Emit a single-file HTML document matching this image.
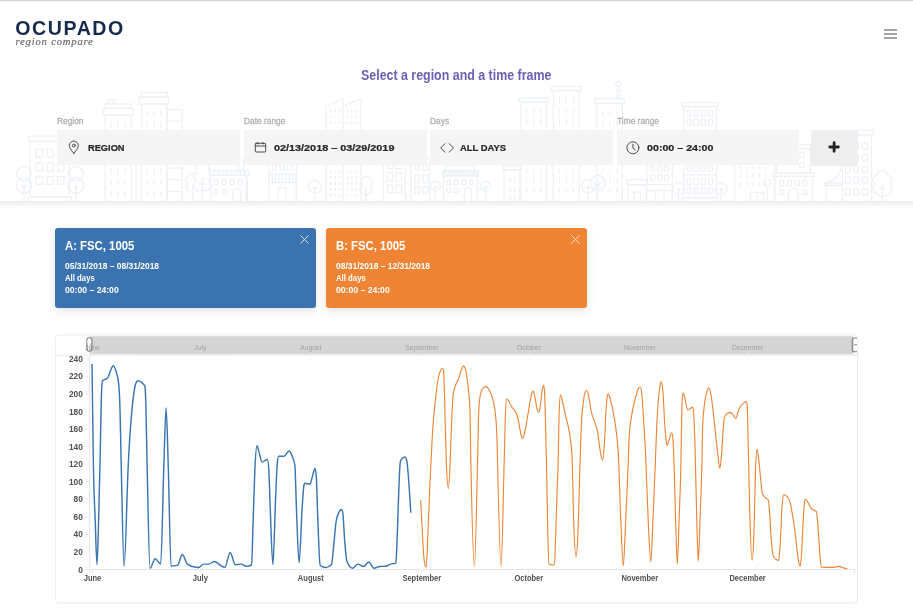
<!DOCTYPE html>
<html><head><meta charset="utf-8"><title>Ocupado region compare</title>
<style>
*{box-sizing:border-box}
html,body{margin:0;padding:0}
body{width:913px;height:614px;overflow:hidden;background:#fff;font-family:"Liberation Sans",sans-serif;position:relative;color:#222}
.abs{position:absolute}
#root{left:0;top:0;width:913px;height:614px;will-change:transform;overflow:hidden}
.sx{display:inline-block;transform-origin:0 50%;white-space:nowrap}
#topline{left:0;top:0;width:913px;height:2px;background:linear-gradient(#d6d7d9 0,#d6d7d9 50%,#f1f1f1 50%,#f1f1f1 100%)}
#header{left:0;top:0;width:913px;height:201px;background:#fff;overflow:hidden}
#hshadow{left:0;top:201px;width:913px;height:8px;background:linear-gradient(#ececec,#f6f6f6 40%,#fff)}
#logo{left:15.3px;top:16.5px;font-weight:bold;font-size:19.6px;letter-spacing:1.55px;color:#152a4c;line-height:22px}
#sub{left:15.5px;top:34.6px;font-family:"Liberation Serif",serif;font-style:italic;font-size:10.6px;letter-spacing:.82px;color:#6e6e6e;line-height:14px;-webkit-text-stroke:.2px #6e6e6e}
.hb{left:884px;width:13px;height:1.6px;background:#a4a4a4}
#title{left:360.7px;top:67px;font-weight:bold;font-size:14.3px;color:#6c5fb4;line-height:17px}
.lab{top:115.8px;font-size:9px;color:#b0b0b0;line-height:10px;-webkit-text-stroke:.3px #b0b0b0}
.fld{top:130px;height:35.4px;width:182.5px;background:rgba(245,245,245,.96);border-radius:1px}
.ftx{top:142.1px;font-weight:bold;font-size:9.8px;color:#262626;line-height:12px;-webkit-text-stroke:.22px #262626}
#plus{left:811px;top:130px;width:47px;height:35.5px;background:#eeeeee;border-radius:2px}
.card{top:228px;width:261px;height:80px;border-radius:3px;box-shadow:0 3px 10px rgba(0,0,0,.1),0 1px 2px rgba(0,0,0,.04);color:#fff}
.card .t{position:absolute;left:10px;top:11.2px;font-weight:bold;font-size:12.6px;line-height:15px}
.card .l{position:absolute;left:10px;font-weight:bold;font-size:8.4px;line-height:10px}
#chartbox{left:55.5px;top:335px;width:802.5px;height:268.4px;border:1px solid #ebebeb;border-radius:2px;background:#fff}
svg text{font-family:"Liberation Sans",sans-serif}
.yt{font-size:8.3px;fill:#505050;font-weight:bold}
.xt{font-size:8.2px;fill:#505050;font-weight:bold}
.bt{font-size:6.8px;fill:#a1a1a1}
</style></head><body>
<div id="root" class="abs">
<div id="header" class="abs">
<svg class="abs" style="left:0;top:0" width="913" height="201" viewBox="0 0 913 201" fill="none" stroke="#edf1f6" stroke-width="1.25"><rect x="28.3" y="136.2" width="43.5" height="5.2"/>
<rect x="30.0" y="141.4" width="39.7" height="55.6"/>
<rect x="28.6" y="197.0" width="43.0" height="5.0"/>
<rect x="36.1" y="149.3" width="6.6" height="7.9"/>
<rect x="47.0" y="149.3" width="6.2" height="7.9"/>
<rect x="57.8" y="149.3" width="6.2" height="7.9"/>
<rect x="36.1" y="163.1" width="6.6" height="7.9"/>
<rect x="47.0" y="163.1" width="6.2" height="7.9"/>
<rect x="57.8" y="163.1" width="6.2" height="7.9"/>
<rect x="36.1" y="176.5" width="6.6" height="7.9"/>
<rect x="47.0" y="176.5" width="6.2" height="7.9"/>
<rect x="57.8" y="176.5" width="6.2" height="7.9"/>
<circle cx="24.0" cy="173.6" r="7.2"/>
<circle cx="24.0" cy="185.5" r="7.8"/>
<path d="M24.0 201V183.5M24.0 188.5l-2.5 -2.5M24.0 188.5l2.5 -2.5"/>
<circle cx="75.8" cy="173.6" r="7.2"/>
<circle cx="75.8" cy="185.5" r="7.8"/>
<path d="M75.8 201V183.5M75.8 188.5l-2.5 -2.5M75.8 188.5l2.5 -2.5"/>
<rect x="108.3" y="99.7" width="5.6" height="4.3"/>
<rect x="104.8" y="104.0" width="26.7" height="4.4"/>
<rect x="103.2" y="108.4" width="29.9" height="6.9"/>
<rect x="105.2" y="115.3" width="25.9" height="86.7"/>
<path d="M111.0 122.0V128.0M118.0 122.0V128.0M124.9 122.0V128.0M111.0 168.0V174.0M118.0 168.0V174.0M124.9 168.0V174.0M111.0 179.7V185.6M118.0 179.7V185.6M124.9 179.7V185.6M111.0 191.5V197.3M118.0 191.5V197.3M124.9 191.5V197.3"/>
<rect x="141.3" y="92.4" width="26.0" height="4.7"/>
<rect x="139.3" y="97.1" width="29.5" height="6.9"/>
<rect x="141.5" y="104.0" width="25.4" height="98.0"/>
<path d="M147.2 110.4V116.3M154.0 110.4V116.3M161.0 110.4V116.3M147.2 122.0V128.0M154.0 122.0V128.0M161.0 122.0V128.0M147.2 168.0V174.0M154.0 168.0V174.0M161.0 168.0V174.0M147.2 179.7V185.6M154.0 179.7V185.6M161.0 179.7V185.6M147.2 191.5V197.3M154.0 191.5V197.3M161.0 191.5V197.3"/>
<rect x="167.3" y="109.4" width="15.0" height="92.6"/>
<path d="M167.3 121.1L182.3 121.1"/>
<path d="M167.3 168.0L182.3 168.0"/>
<path d="M167.3 179.7L182.3 179.7"/>
<path d="M167.3 191.5L182.3 191.5"/>
<path d="M136.0 165.0L136.0 201.0"/>
<path d="M190 192a4.5 4.5 0 0 1-2-8a4.2 4.2 0 0 1 1.500-8a3.4 3.4 0 0 1 6.400 0a4.2 4.2 0 0 1 1.500 8a4.5 4.5 0 0 1-2 8z"/>
<path d="M192.7 201V184"/>
<path fill="#fff" d="M198 190.5a5.5 5.5 0 0 1-2-9.5a5.2 5.2 0 0 1 1.2-9a4.8 4.8 0 0 1 1.8-8a3.6 3.6 0 0 1 6.8 0a4.8 4.8 0 0 1 1.8 8a5.2 5.2 0 0 1 1.2 9a5.5 5.500 0 0 1-2 9.5z"/>
<path d="M202.4 201V178M202.4 185.5l-3 -3M202.4 185.5l3 -3"/>
<rect x="210.0" y="170.6" width="39.0" height="4.8"/>
<rect x="210.8" y="175.4" width="35.6" height="26.6"/>
<path d="M247.6 175.4L247.6 201.0"/>
<path d="M214.3 170.6L214.3 175.4"/>
<path d="M218.7 170.6L218.7 175.4"/>
<path d="M223.0 170.6L223.0 175.4"/>
<path d="M227.3 170.6L227.3 175.4"/>
<path d="M231.7 170.6L231.7 175.4"/>
<path d="M236.0 170.6L236.0 175.4"/>
<path d="M240.3 170.6L240.3 175.4"/>
<path d="M244.6 170.6L244.6 175.4"/>
<path d="M214.3 184.6V181.2A1.8 1.8 0 0 1 217.9 181.2V184.6Z"/>
<path d="M222.5 184.6V181.2A1.8 1.8 0 0 1 226.1 181.2V184.6Z"/>
<path d="M230.5 184.6V181.2A1.8 1.8 0 0 1 234.1 181.2V184.6Z"/>
<path d="M238.7 184.6V181.2A1.8 1.8 0 0 1 242.3 181.2V184.6Z"/>
<path d="M214.3 194.0V191.3A1.8 1.8 0 0 1 217.9 191.3V194.0Z"/>
<path d="M222.5 194.0V191.3A1.8 1.8 0 0 1 226.1 191.3V194.0Z"/>
<path d="M232.7 201.0V192.4A3.9 3.9 0 0 1 240.5 192.4V201.0"/>
<rect x="238.5" y="160.0" width="5.0" height="10.6"/>
<rect x="268.8" y="160.0" width="27.4" height="42.0"/>
<rect x="272.3" y="164.0" width="3.9" height="6.0"/>
<rect x="280.2" y="164.0" width="3.9" height="6.0"/>
<rect x="287.0" y="164.0" width="4.9" height="6.0"/>
<rect x="268.8" y="173.9" width="27.4" height="8.8"/>
<path d="M272.2 173.9L272.2 182.7"/>
<path d="M275.6 173.9L275.6 182.7"/>
<path d="M279.1 173.9L279.1 182.7"/>
<path d="M282.5 173.9L282.5 182.7"/>
<path d="M285.9 173.9L285.9 182.7"/>
<path d="M289.3 173.9L289.3 182.7"/>
<path d="M292.7 173.9L292.7 182.7"/>
<rect x="278.2" y="187.6" width="7.8" height="14.4"/>
<circle cx="314.7" cy="187.0" r="6.4"/>
<path d="M314.7 201V186.0M314.7 189.5l-2 -2M314.7 189.5l2 -2"/>
<path d="M326.1 201V106.1L343 98.9V201M343 106.1L361 98.7V201"/>
<path d="M330.5 109.5v2.8M335.1 109.5v2.8M339.4 109.5v2.8M330.5 115.4v2.8M335.1 115.4v2.8M339.4 115.4v2.8M330.5 121.3v2.8M335.1 121.3v2.8M339.4 121.3v2.8M330.5 170.2v2.8M335.1 170.2v2.8M339.4 170.2v2.8M330.5 176.1v2.8M335.1 176.1v2.8M339.4 176.1v2.8M330.5 182.0v2.8M335.1 182.0v2.8M339.4 182.0v2.8M330.5 187.9v2.8M335.1 187.9v2.8M339.4 187.9v2.8M330.5 193.8v2.8M335.1 193.8v2.8M339.4 193.8v2.8M347.6 109.5v2.8M351.9 109.5v2.8M356.3 109.5v2.8M347.6 115.4v2.8M351.9 115.4v2.8M356.3 115.4v2.8M347.6 121.3v2.8M351.9 121.3v2.8M356.3 121.3v2.8M347.6 170.2v2.8M351.9 170.2v2.8M356.3 170.2v2.8M347.6 176.1v2.8M351.9 176.1v2.8M356.3 176.1v2.8M347.6 182.0v2.8M351.9 182.0v2.8M356.3 182.0v2.8M347.6 187.9v2.8M351.9 187.9v2.8M356.3 187.9v2.8M347.6 193.8v2.8M351.9 193.8v2.8M356.3 193.8v2.8" stroke-width="1.7"/>
<path d="M365.6 201V186M363 193.5a4.5 4.5 0 0 1-1.2-8a4 4 0 0 1 1-7.200a3.3 3.3 0 0 1 6.400 0a4 4 0 0 1 1 7.200a4.5 4.5 0 0 1-1.2 8a4 4 0 0 1-6 0z"/>
<rect x="383.0" y="160.0" width="22.4" height="42.0"/>
<rect x="387.4" y="164.0" width="5.3" height="4.6"/>
<rect x="396.0" y="164.0" width="5.5" height="4.6"/>
<rect x="387.4" y="172.9" width="5.3" height="7.8"/>
<rect x="396.0" y="172.9" width="5.5" height="7.8"/>
<rect x="387.4" y="185.0" width="5.3" height="7.8"/>
<rect x="396.0" y="185.0" width="5.5" height="7.8"/>
<path d="M410.9 201V160M429.8 201V160L427.5 157.3L425 160"/>
<rect x="414.8" y="165.0" width="4.2" height="5.0"/>
<rect x="423.0" y="165.0" width="4.9" height="5.0"/>
<rect x="414.8" y="174.9" width="4.2" height="7.8"/>
<rect x="423.0" y="174.9" width="4.9" height="7.8"/>
<rect x="414.8" y="186.6" width="4.2" height="6.8"/>
<rect x="423.0" y="186.6" width="4.9" height="6.8"/>
<circle cx="435.3" cy="186.2" r="4.9"/>
<path d="M435.3 201V185.2M435.3 188.7l-2 -2M435.3 188.7l2 -2"/>
<rect x="442.5" y="171.0" width="35.8" height="4.8"/>
<rect x="443.5" y="175.8" width="33.8" height="26.2"/>
<path d="M442.5 175.8l2.24 -4.8l2.24 4.8l2.24 -4.8l2.24 4.8l2.24 -4.8l2.24 4.8l2.24 -4.8l2.24 4.8l2.24 -4.8l2.24 4.8l2.24 -4.8l2.24 4.8l2.24 -4.8l2.24 4.8l2.24 -4.8l2.24 4.8"/>
<rect x="446.0" y="165.0" width="28.8" height="6.0"/>
<path d="M447.0 184.6V181.5A1.8 1.8 0 0 1 450.6 181.5V184.6Z"/>
<path d="M454.4 184.6V181.5A1.8 1.8 0 0 1 458.0 181.5V184.6Z"/>
<path d="M462.2 184.6V181.5A1.8 1.8 0 0 1 465.8 181.5V184.6Z"/>
<path d="M469.6 184.6V181.5A1.8 1.8 0 0 1 473.2 181.5V184.6Z"/>
<path d="M447.0 192.4V189.8A1.8 1.8 0 0 1 450.6 189.8V192.4Z"/>
<path d="M454.4 192.4V189.8A1.8 1.8 0 0 1 458.0 189.8V192.4Z"/>
<path d="M464.4 201.0V191.1A3.5 3.5 0 0 1 471.4 191.1V201.0"/>
<circle cx="485.5" cy="186.2" r="4.9"/>
<path d="M485.5 201V185.2M485.5 188.7l-2 -2M485.5 188.7l2 -2"/>
<rect x="502.7" y="166.0" width="18.0" height="4.0"/>
<rect x="504.0" y="170.0" width="15.7" height="32.0"/>
<path d="M509.9 176.8V181.7M514.8 176.8V181.7M509.9 187.6V192.5M514.8 187.6V192.5M509.9 196.3V200.0M514.8 196.3V200.0"/>
<rect x="519.2" y="97.9" width="28.9" height="4.1"/>
<rect x="520.8" y="102.0" width="25.8" height="100.0"/>
<path d="M526.7 108.5V115.6M533.8 108.5V115.6M540.9 108.5V115.6M526.7 118.7V125.8M533.8 118.7V125.8M540.9 118.7V125.8M526.7 168.5V173.6M533.8 168.5V173.6M540.9 168.5V173.6M526.7 177.7V183.8M533.8 177.7V183.8M540.9 177.7V183.8M526.7 186.9V193.0M533.8 186.9V193.0M540.9 186.9V193.0"/>
<rect x="551.7" y="86.5" width="29.5" height="4.1"/>
<rect x="553.2" y="90.6" width="26.0" height="111.4"/>
<path d="M559.5 97.3V104.4M566.4 97.3V104.4M573.5 97.3V104.4M559.5 108.5V115.6M566.4 108.5V115.6M573.5 108.5V115.6M559.5 118.7V125.8M566.4 118.7V125.8M573.5 118.7V125.8M559.5 168.5V173.6M566.4 168.5V173.6M573.5 168.5V173.6M559.5 177.7V183.8M566.4 177.7V183.8M573.5 177.7V183.8M559.5 186.9V193.0M566.4 186.9V193.0M573.5 186.9V193.0"/>
<rect x="595.1" y="98.7" width="29.3" height="4.7"/>
<rect x="596.9" y="103.4" width="25.5" height="98.6"/>
<path d="M602.6 110.5V116.6M609.7 110.5V116.6M616.9 110.5V116.6M602.6 120.7V126.8M609.7 120.7V126.8M616.9 120.7V126.8M602.6 168.5V173.6M609.7 168.5V173.6M616.9 168.5V173.6M602.6 177.7V183.8M609.7 177.7V183.8M616.9 177.7V183.8M602.6 186.9V193.0M609.7 186.9V193.0M616.9 186.9V193.0"/>
<circle cx="618.3" cy="83.7" r="2.6"/>
<circle cx="618.3" cy="90.6" r="1.8"/>
<circle cx="618.3" cy="96.3" r="2.0"/>
<circle cx="588.4" cy="186.3" r="6.7"/>
<path d="M588.4 201V185M588.4 189.5l-2.2-2.2M588.4 189.5l2.2-2.2"/>
<circle cx="597.9" cy="182.8" r="7.5"/>
<path d="M597.9 201V181M597.9 186l-2.5-2.5M597.9 186l2.5-2.5"/>
<rect x="627.0" y="179.7" width="20.4" height="5.1"/>
<rect x="628.0" y="184.8" width="18.4" height="17.2"/>
<rect x="634.2" y="192.0" width="6.1" height="10.0"/>
<rect x="646.8" y="160.0" width="25.4" height="42.0"/>
<rect x="650.7" y="166.0" width="4.0" height="5.0" rx="1"/>
<rect x="657.6" y="166.0" width="4.3" height="5.0" rx="1"/>
<rect x="664.4" y="166.0" width="4.3" height="5.0" rx="1"/>
<rect x="650.7" y="174.8" width="4.0" height="5.9" rx="1"/>
<rect x="657.6" y="174.8" width="4.3" height="5.9" rx="1"/>
<rect x="664.4" y="174.8" width="4.3" height="5.9" rx="1"/>
<path d="M646.8 184.6L672.2 184.6"/>
<path d="M646.8 190.5L672.2 190.5"/>
<path d="M655.0 190.5L655.0 201.0"/>
<path d="M664.0 190.5L664.0 201.0"/>
<circle cx="678.7" cy="188.5" r="5.9"/>
<path d="M678.7 201V187.5M678.7 191.0l-2 -2M678.7 191.0l2 -2"/>
<rect x="682.4" y="102.6" width="35.3" height="3.9"/>
<rect x="683.6" y="106.5" width="33.0" height="91.5"/>
<rect x="682.4" y="198.0" width="35.3" height="4.0"/>
<rect x="686.9" y="110.4" width="3.9" height="5.9" rx="1"/>
<rect x="694.1" y="110.4" width="3.9" height="5.9" rx="1"/>
<rect x="701.1" y="110.4" width="4.3" height="5.9" rx="1"/>
<rect x="708.4" y="110.4" width="4.3" height="5.9" rx="1"/>
<rect x="686.9" y="119.2" width="3.9" height="6.2" rx="1"/>
<rect x="694.1" y="119.2" width="3.9" height="6.2" rx="1"/>
<rect x="701.1" y="119.2" width="4.3" height="6.2" rx="1"/>
<rect x="708.4" y="119.2" width="4.3" height="6.2" rx="1"/>
<rect x="686.9" y="166.0" width="3.9" height="5.0" rx="1"/>
<rect x="694.1" y="166.0" width="3.9" height="5.0" rx="1"/>
<rect x="701.1" y="166.0" width="4.3" height="5.0" rx="1"/>
<rect x="708.4" y="166.0" width="4.3" height="5.0" rx="1"/>
<rect x="686.9" y="178.8" width="3.9" height="5.8" rx="1"/>
<rect x="694.1" y="178.8" width="3.9" height="5.8" rx="1"/>
<rect x="701.1" y="178.8" width="4.3" height="5.8" rx="1"/>
<rect x="708.4" y="178.8" width="4.3" height="5.8" rx="1"/>
<rect x="686.9" y="187.6" width="3.9" height="5.8" rx="1"/>
<rect x="694.1" y="187.6" width="3.9" height="5.8" rx="1"/>
<rect x="701.1" y="187.6" width="4.3" height="5.8" rx="1"/>
<rect x="708.4" y="187.6" width="4.3" height="5.8" rx="1"/>
<path d="M683.6 174.9L716.6 174.9"/>
<circle cx="721.1" cy="188.5" r="5.9"/>
<path d="M721.1 201V187.5M721.1 191.0l-2 -2M721.1 191.0l2 -2"/>
<rect x="734.7" y="160.0" width="40.1" height="42.0"/>
<path d="M740.6 166.0V169.0M747.0 166.0V169.0M753.3 166.0V169.0M759.7 166.0V169.0M766.0 166.0V169.0M740.6 172.9V177.8M747.0 172.9V177.8M753.3 172.9V177.8M759.7 172.9V177.8M766.0 172.9V177.8M740.6 181.7V186.6M747.0 181.7V186.6M753.3 181.7V186.6M759.7 181.7V186.6M766.0 181.7V186.6"/>
<rect x="750.4" y="192.4" width="13.1" height="9.6"/>
<path d="M757.0 192.4L757.0 201.0"/>
<circle cx="767.4" cy="182.7" r="3.4"/>
<path d="M767.4 186.1L767.4 201.0"/>
<rect x="772.5" y="172.9" width="42.0" height="3.5"/>
<rect x="774.5" y="176.4" width="38.1" height="25.6"/>
<rect x="776.4" y="144.6" width="34.2" height="28.3"/>
<path d="M776.4 148.5L810.6 148.5"/>
<path d="M779.7 185.6V182.1A2.0 2.0 0 0 1 783.7 182.1V185.6Z"/>
<path d="M787.5 185.6V182.1A2.0 2.0 0 0 1 791.5 182.1V185.6Z"/>
<path d="M795.3 185.6V182.1A2.0 2.0 0 0 1 799.3 182.1V185.6Z"/>
<path d="M802.8 185.6V182.1A2.0 2.0 0 0 1 806.8 182.1V185.6Z"/>
<path d="M779.7 194.4V191.5A2.0 2.0 0 0 1 783.7 191.5V194.4Z"/>
<path d="M802.8 194.4V191.5A2.0 2.0 0 0 1 806.8 191.5V194.4Z"/>
<path d="M799.8 157.7V154.0A2.0 2.0 0 0 1 803.8 154.0V157.7Z"/>
<path d="M799.8 167.5V163.5A2.0 2.0 0 0 1 803.8 163.5V167.5Z"/>
<path d="M788.6 201.0V193.3A4.8 4.8 0 0 1 798.3 193.3V201.0"/>
<path d="M841 168.4Q839.5 179.500 825 182.8M826.3 185.6V201"/>
<rect x="824.3" y="182.8" width="16.7" height="2.7" rx="1.3"/>
<path d="M827.6 182.8L827.6 185.5"/>
<path d="M831.0 182.8L831.0 185.5"/>
<path d="M834.3 182.8L834.3 185.5"/>
<path d="M837.7 182.8L837.7 185.5"/>
<rect x="840.9" y="130.3" width="33.2" height="4.5"/>
<rect x="842.4" y="134.8" width="29.2" height="67.2"/>
<rect x="845.2" y="142.6" width="5.0" height="6.9" rx="2"/>
<rect x="845.2" y="154.3" width="5.0" height="6.9" rx="2"/>
<rect x="845.2" y="166.0" width="5.0" height="6.9" rx="2"/>
<rect x="845.2" y="176.8" width="5.0" height="6.9" rx="2"/>
<rect x="845.2" y="188.5" width="5.0" height="6.9" rx="2"/>
<rect x="853.6" y="142.6" width="5.0" height="6.9" rx="2"/>
<rect x="853.6" y="154.3" width="5.0" height="6.9" rx="2"/>
<rect x="853.6" y="166.0" width="5.0" height="6.9" rx="2"/>
<rect x="853.6" y="176.8" width="5.0" height="6.9" rx="2"/>
<rect x="853.6" y="188.5" width="5.0" height="6.9" rx="2"/>
<rect x="862.4" y="142.6" width="5.0" height="6.9" rx="2"/>
<rect x="862.4" y="154.3" width="5.0" height="6.9" rx="2"/>
<rect x="862.4" y="166.0" width="5.0" height="6.9" rx="2"/>
<rect x="862.4" y="176.8" width="5.0" height="6.9" rx="2"/>
<rect x="862.4" y="188.5" width="5.0" height="6.9" rx="2"/>
<path d="M882.5 201V183M882.5 190l-2.8-2.8M882.5 190l2.8-2.8M878 194.7a6.300 6.300 0 0 1-2.800-10.700a5 5 0 0 1 2.300-9a5.050 5.050 0 0 1 10 0a5 5 0 0 1 2.300 9a6.300 6.300 0 0 1-2.800 10.700a6 6 0 0 1-9 0z"/></svg>
</div>
<div id="hshadow" class="abs"></div>
<div id="topline" class="abs"></div>
<div id="logo" class="abs">OCUPADO</div>
<div id="sub" class="abs">region compare</div>
<div class="abs hb" style="top:29.3px"></div><div class="abs hb" style="top:33.3px"></div><div class="abs hb" style="top:37.3px"></div>
<div id="title" class="abs"><span class="sx" style="transform:scaleX(.868)">Select a region and a time frame</span></div>

<div class="abs lab" style="left:57.3px"><span class="sx" style="transform:scaleX(.93)">Region</span></div>
<div class="abs lab" style="left:244px"><span class="sx" style="transform:scaleX(.93)">Date range</span></div>
<div class="abs lab" style="left:430.3px"><span class="sx" style="transform:scaleX(.93)">Days</span></div>
<div class="abs lab" style="left:616.8px"><span class="sx" style="transform:scaleX(.93)">Time range</span></div>

<div class="abs fld" style="left:57.3px"></div>
<div class="abs fld" style="left:244px"></div>
<div class="abs fld" style="left:430.3px"></div>
<div class="abs fld" style="left:616.6px"></div>
<div id="plus" class="abs"></div>

<div class="abs ftx" style="left:87.6px"><span class="sx" style="transform:scaleX(.945)">REGION</span></div>
<div class="abs ftx" style="left:273.8px"><span class="sx" style="transform:scaleX(1.105)">02/13/2018 – 03/29/2019</span></div>
<div class="abs ftx" style="left:460.2px"><span class="sx" style="transform:scaleX(.96)">ALL DAYS</span></div>
<div class="abs ftx" style="left:646.6px"><span class="sx" style="transform:scaleX(1.09)">00:00 – 24:00</span></div>

<svg class="abs" style="left:0;top:125px" width="913" height="50" viewBox="0 125 913 50" fill="none" stroke="#444" stroke-width=".95" stroke-linecap="round" stroke-linejoin="round">
<!-- pin -->
<path d="M73.8 153.4C71.2 150 69.3 148 69.3 145.6a4.5 4.5 0 0 1 9 0c0 2.400-1.900 4.400-4.500 7.800z"/><circle cx="73.8" cy="145.600" r="1.5"/>
<!-- calendar -->
<rect x="255.300" y="143.300" width="10.400" height="8.700" rx=".8"/><line x1="255.300" y1="146" x2="265.700" y2="146"/><line x1="258" y1="142.400" x2="258" y2="144"/><line x1="263" y1="142.400" x2="263" y2="144"/>
<!-- chevrons -->
<path d="M445 143.600L440.700 147.900L445 152.200M449.200 143.600L453.500 147.900L449.200 152.200"/>
<!-- clock -->
<circle cx="632.900" cy="147.800" r="6"/><path d="M632.900 144.200V148L635.300 149.900"/>
<!-- plus -->
<path d="M834.100 142.700V151.300M829.800 147H838.400" stroke="#222" stroke-width="2.800" stroke-linecap="round"/>
</svg>

<div class="abs card" style="left:55px;background:#3a73b0">
<div class="t"><span class="sx" style="transform:scaleX(.9)">A: FSC, 1005</span></div>
<div class="l" style="top:32.8px"><span class="sx" style="transform:scaleX(1.01)">05/31/2018 – 08/31/2018</span></div>
<div class="l" style="top:44.800px"><span class="sx" style="transform:scaleX(.93)">All days</span></div>
<div class="l" style="top:56.800px"><span class="sx" style="transform:scaleX(1.03)">00:00 – 24:00</span></div>
<svg class="abs" style="left:245.2px;top:6.8px" width="9" height="9" viewBox="0 0 9 9" stroke="#fff" stroke-width=".9" opacity=".85"><path d="M.4 .4L8.600 8.600M8.600 .4L.4 8.600"/></svg>
</div>
<div class="abs card" style="left:326px;background:#ee8434">
<div class="t"><span class="sx" style="transform:scaleX(.9)">B: FSC, 1005</span></div>
<div class="l" style="top:32.8px"><span class="sx" style="transform:scaleX(1.01)">08/31/2018 – 12/31/2018</span></div>
<div class="l" style="top:44.800px"><span class="sx" style="transform:scaleX(.93)">All days</span></div>
<div class="l" style="top:56.800px"><span class="sx" style="transform:scaleX(1.03)">00:00 – 24:00</span></div>
<svg class="abs" style="left:245.2px;top:6.8px" width="9" height="9" viewBox="0 0 9 9" stroke="#fff" stroke-width=".9" opacity=".85"><path d="M.4 .4L8.600 8.600M8.600 .4L.4 8.600"/></svg>
</div>

<svg class="abs" style="left:0;top:330px" width="913" height="284" viewBox="0 330 913 284">
<defs><clipPath id="cc"><rect x="56" y="335.4" width="801" height="267"/></clipPath></defs>
<rect x="55.5" y="334.9" width="802" height="268" rx="3" fill="#fff" stroke="#ececec" stroke-width="1"/>
<g clip-path="url(#cc)">
<rect x="89.6" y="336.200" width="764" height="18.100" fill="#d5d5d5"/>
<line x1="92.5" x2="92.5" y1="351" y2="354.5" stroke="#e6e6e6" stroke-width="1"/><text x="92.5" y="350.3" text-anchor="middle" class="bt">June</text><line x1="200.3" x2="200.3" y1="351" y2="354.5" stroke="#e6e6e6" stroke-width="1"/><text x="200.3" y="350.3" text-anchor="middle" class="bt">July</text><line x1="310.8" x2="310.8" y1="351" y2="354.5" stroke="#e6e6e6" stroke-width="1"/><text x="310.8" y="350.3" text-anchor="middle" class="bt">August</text><line x1="421.8" x2="421.8" y1="351" y2="354.5" stroke="#e6e6e6" stroke-width="1"/><text x="421.8" y="350.3" text-anchor="middle" class="bt">September</text><line x1="528.8" x2="528.8" y1="351" y2="354.5" stroke="#e6e6e6" stroke-width="1"/><text x="528.8" y="350.3" text-anchor="middle" class="bt">October</text><line x1="639.8" x2="639.8" y1="351" y2="354.5" stroke="#e6e6e6" stroke-width="1"/><text x="639.8" y="350.3" text-anchor="middle" class="bt">November</text><line x1="747.6" x2="747.6" y1="351" y2="354.5" stroke="#e6e6e6" stroke-width="1"/><text x="747.6" y="350.3" text-anchor="middle" class="bt">December</text>
<line x1="56.500" x2="857" y1="355.300" y2="355.300" stroke="#ececec" stroke-width="1"/>
<line x1="89.700" x2="89.700" y1="355" y2="573.500" stroke="#e4e4e4" stroke-width="1"/>
<line x1="84.500" x2="854.700" y1="569.500" y2="569.500" stroke="#e4e4e4" stroke-width="1"/>
<line x1="854.500" x2="854.500" y1="569.500" y2="573.500" stroke="#e4e4e4" stroke-width="1"/>
<line x1="84.5" x2="89.5" y1="569.5" y2="569.5" stroke="#ebebeb" stroke-width="1"/><text x="82.8" y="572.5" text-anchor="end" class="yt">0</text><line x1="84.5" x2="89.5" y1="552.0" y2="552.0" stroke="#ebebeb" stroke-width="1"/><text x="82.8" y="555.0" text-anchor="end" class="yt">20</text><line x1="84.5" x2="89.5" y1="534.4" y2="534.4" stroke="#ebebeb" stroke-width="1"/><text x="82.8" y="537.4" text-anchor="end" class="yt">40</text><line x1="84.5" x2="89.5" y1="516.9" y2="516.9" stroke="#ebebeb" stroke-width="1"/><text x="82.8" y="519.9" text-anchor="end" class="yt">60</text><line x1="84.5" x2="89.5" y1="499.3" y2="499.3" stroke="#ebebeb" stroke-width="1"/><text x="82.8" y="502.3" text-anchor="end" class="yt">80</text><line x1="84.5" x2="89.5" y1="481.8" y2="481.8" stroke="#ebebeb" stroke-width="1"/><text x="82.8" y="484.8" text-anchor="end" class="yt">100</text><line x1="84.5" x2="89.5" y1="464.2" y2="464.2" stroke="#ebebeb" stroke-width="1"/><text x="82.8" y="467.2" text-anchor="end" class="yt">120</text><line x1="84.5" x2="89.5" y1="446.6" y2="446.6" stroke="#ebebeb" stroke-width="1"/><text x="82.8" y="449.6" text-anchor="end" class="yt">140</text><line x1="84.5" x2="89.5" y1="429.1" y2="429.1" stroke="#ebebeb" stroke-width="1"/><text x="82.8" y="432.1" text-anchor="end" class="yt">160</text><line x1="84.5" x2="89.5" y1="411.5" y2="411.5" stroke="#ebebeb" stroke-width="1"/><text x="82.8" y="414.5" text-anchor="end" class="yt">180</text><line x1="84.5" x2="89.5" y1="394.0" y2="394.0" stroke="#ebebeb" stroke-width="1"/><text x="82.8" y="397.0" text-anchor="end" class="yt">200</text><line x1="84.5" x2="89.5" y1="376.4" y2="376.4" stroke="#ebebeb" stroke-width="1"/><text x="82.8" y="379.4" text-anchor="end" class="yt">220</text><line x1="84.5" x2="89.5" y1="358.9" y2="358.9" stroke="#ebebeb" stroke-width="1"/><text x="82.8" y="361.9" text-anchor="end" class="yt">240</text><line x1="92.5" x2="92.5" y1="569.5" y2="573.5" stroke="#ebebeb" stroke-width="1"/><text transform="translate(92.5,580.9) scale(.917,1)" text-anchor="middle" class="xt">June</text><line x1="200.3" x2="200.3" y1="569.5" y2="573.5" stroke="#ebebeb" stroke-width="1"/><text transform="translate(200.3,580.9) scale(.917,1)" text-anchor="middle" class="xt">July</text><line x1="310.8" x2="310.8" y1="569.5" y2="573.5" stroke="#ebebeb" stroke-width="1"/><text transform="translate(310.8,580.9) scale(.917,1)" text-anchor="middle" class="xt">August</text><line x1="421.8" x2="421.8" y1="569.5" y2="573.5" stroke="#ebebeb" stroke-width="1"/><text transform="translate(421.8,580.9) scale(.917,1)" text-anchor="middle" class="xt">September</text><line x1="528.8" x2="528.8" y1="569.5" y2="573.5" stroke="#ebebeb" stroke-width="1"/><text transform="translate(528.8,580.9) scale(.917,1)" text-anchor="middle" class="xt">October</text><line x1="639.8" x2="639.8" y1="569.5" y2="573.5" stroke="#ebebeb" stroke-width="1"/><text transform="translate(639.8,580.9) scale(.917,1)" text-anchor="middle" class="xt">November</text><line x1="747.6" x2="747.6" y1="569.5" y2="573.5" stroke="#ebebeb" stroke-width="1"/><text transform="translate(747.6,580.9) scale(.917,1)" text-anchor="middle" class="xt">December</text>
<path d="M92.0,364.0C92.23,381.00 92.47,398.33 92.7,415.0C92.93,431.67 93.17,450.21 93.4,464.0C94.00,499.47 94.60,503.22 95.2,520.0C95.80,536.78 96.40,564.70 97.0,564.7C97.53,564.70 98.07,538.33 98.6,520.0C99.07,503.96 99.53,483.88 100.0,464.0C100.53,441.28 101.07,403.31 101.6,391.1C101.90,384.23 102.20,381.12 102.5,380.8C103.70,379.53 104.90,379.82 106.1,378.9C106.80,378.36 107.50,378.24 108.2,377.0C109.00,375.59 109.80,372.21 110.6,370.4C111.50,368.37 112.40,365.80 113.3,365.8C114.20,365.80 115.10,368.28 116.0,371.3C116.90,374.32 117.80,375.50 118.7,383.9C119.13,387.94 119.57,394.86 120.0,409.2C120.40,422.44 120.80,446.94 121.2,464.0C122.17,505.22 123.13,566.50 124.1,566.5C125.50,566.50 126.90,491.07 128.3,464.0C129.03,449.82 129.77,437.57 130.5,427.3C131.40,414.70 132.30,405.79 133.2,398.4C133.93,392.38 134.67,387.41 135.4,384.8C136.17,382.07 136.93,380.70 137.7,380.7C138.90,380.70 140.10,381.20 141.3,382.1C142.50,383.00 143.70,383.43 144.9,386.1C145.20,386.77 145.50,393.02 145.8,402.0C146.23,414.98 146.67,444.91 147.1,464.0C148.07,506.59 149.03,568.30 150.0,568.3C151.73,568.30 153.47,558.70 155.2,558.7C157.03,558.70 158.87,564.10 160.7,564.1C161.77,564.10 162.83,493.68 163.9,464.0C164.63,443.59 165.37,408.00 166.1,408.0C166.80,408.00 167.50,442.82 168.2,464.0C169.17,493.25 170.13,566.10 171.1,566.1C173.23,566.10 175.37,565.87 177.5,565.4C179.10,565.05 180.70,554.50 182.3,554.5C184.00,554.50 185.70,562.59 187.4,564.1C189.20,565.70 191.00,565.94 192.8,566.5C194.73,567.11 196.67,567.50 198.6,567.5C200.30,567.50 202.00,564.10 203.7,564.1C205.37,564.10 207.03,564.10 208.7,564.1C210.63,564.10 212.57,561.40 214.5,561.4C216.30,561.40 218.10,563.97 219.9,565.0C221.53,565.94 223.17,567.40 224.8,567.4C226.60,567.40 228.40,552.40 230.2,552.4C231.90,552.40 233.60,564.70 235.3,564.7C237.30,564.70 239.30,564.10 241.3,564.1C242.90,564.10 244.50,566.30 246.1,566.3C247.93,566.30 249.77,565.87 251.6,565.0C252.07,564.78 252.53,538.98 253.0,525.4C253.60,507.93 254.20,484.16 254.8,471.1C255.53,455.14 256.27,445.80 257.0,445.8C257.77,445.80 258.53,450.61 259.3,453.1C260.20,456.02 261.10,462.10 262.0,462.1C263.83,462.10 265.67,459.40 267.5,459.4C267.97,459.40 268.43,463.30 268.9,471.1C269.33,478.34 269.77,496.16 270.2,507.3C271.10,530.43 272.00,564.70 272.9,564.7C273.80,564.70 274.70,518.01 275.6,498.3C276.20,485.16 276.80,467.45 277.4,462.1C277.83,458.23 278.27,456.30 278.7,456.3C280.50,456.30 282.30,456.30 284.1,456.3C285.77,456.30 287.43,450.90 289.1,450.9C290.20,450.90 291.30,453.61 292.4,456.7C293.23,459.04 294.07,459.70 294.9,465.7C295.40,469.30 295.90,494.72 296.4,507.3C297.30,529.95 298.20,562.80 299.1,562.8C300.13,562.80 301.17,522.30 302.2,507.3C302.80,498.59 303.40,486.38 304.0,484.7C304.33,483.77 304.67,483.30 305.0,483.3C306.63,483.30 308.27,484.20 309.9,484.2C310.80,484.20 311.70,478.48 312.6,475.7C313.40,473.23 314.20,468.40 315.0,468.4C315.43,468.40 315.87,471.13 316.3,476.6C316.77,482.49 317.23,504.53 317.7,516.3C318.53,537.32 319.37,564.43 320.2,565.4C321.00,566.33 321.80,566.49 322.6,566.8C323.80,567.27 325.00,567.50 326.2,567.5C327.10,567.50 328.00,567.07 328.9,566.5C329.80,565.93 330.70,565.70 331.6,564.1C332.20,563.03 332.80,554.28 333.4,548.8C334.30,540.58 335.20,527.60 336.1,521.6C337.00,515.60 337.90,514.63 338.8,512.6C339.73,510.49 340.67,509.40 341.6,509.4C342.00,509.40 342.40,510.47 342.8,512.6C343.40,515.80 344.00,532.12 344.6,539.7C345.27,548.12 345.93,556.37 346.6,559.6C347.47,563.80 348.33,564.60 349.2,565.9C350.27,567.50 351.33,568.30 352.4,568.3C354.20,568.30 356.00,564.10 357.8,564.1C359.73,564.10 361.67,566.50 363.6,566.5C365.30,566.50 367.00,561.90 368.7,561.9C370.50,561.90 372.30,568.30 374.1,568.3C375.90,568.30 377.70,566.61 379.5,566.5C381.60,566.37 383.70,566.43 385.8,566.3C387.33,566.20 388.87,564.61 390.4,564.1C392.20,563.50 394.00,563.80 395.8,563.2C396.20,563.07 396.60,552.33 397.0,543.3C397.50,532.01 398.00,510.97 398.5,498.2C399.10,482.88 399.70,464.33 400.3,462.0C400.90,459.67 401.50,459.08 402.1,458.5C403.13,457.50 404.17,457.00 405.2,457.0C405.80,457.00 406.40,458.70 407.0,462.1C407.60,465.50 408.20,474.15 408.8,482.0C409.47,490.73 410.13,502.47 410.8,512.7" fill="none" stroke="#3a76b2" stroke-width="1.450" stroke-linejoin="round" stroke-linecap="butt"/>
<path d="M420.7,500.0C421.90,520.47 423.10,553.40 424.3,561.4C424.90,565.40 425.50,567.40 426.1,567.4C426.70,567.40 427.30,547.35 427.9,534.3C428.50,521.25 429.10,502.68 429.7,489.1C430.13,479.29 430.57,470.77 431.0,462.0C431.50,451.88 432.00,441.01 432.5,432.7C433.40,417.74 434.30,410.73 435.2,402.0C436.10,393.27 437.00,385.57 437.9,380.3C438.80,375.03 439.70,372.20 440.6,370.4C441.33,368.93 442.07,368.20 442.8,368.2C443.13,368.20 443.47,370.43 443.8,374.9C444.23,380.71 444.67,403.45 445.1,418.3C445.53,433.15 445.97,453.34 446.4,464.0C447.07,480.40 447.73,488.60 448.4,488.6C448.97,488.60 449.53,476.62 450.1,464.0C450.53,454.35 450.97,437.68 451.4,427.3C452.00,412.92 452.60,399.98 453.2,394.8C453.83,389.33 454.47,388.88 455.1,386.6C456.30,382.28 457.50,381.94 458.7,378.5C459.60,375.92 460.50,371.70 461.4,369.5C462.10,367.79 462.80,365.80 463.5,365.8C464.30,365.80 465.10,367.63 465.9,371.3C466.67,374.81 467.43,379.58 468.2,387.5C468.77,393.36 469.33,394.73 469.9,409.2C470.23,417.71 470.57,447.62 470.9,464.0C472.07,521.32 473.23,566.50 474.4,566.5C475.43,566.50 476.47,508.04 477.5,464.0C477.83,449.79 478.17,428.93 478.5,418.3C478.83,407.67 479.17,402.89 479.5,400.2C480.40,392.93 481.30,390.82 482.2,389.3C483.27,387.50 484.33,386.60 485.4,386.6C486.73,386.60 488.07,387.80 489.4,390.2C490.60,392.36 491.80,394.66 493.0,400.2C493.90,404.36 494.80,405.60 495.7,416.4C496.20,422.40 496.70,426.07 497.2,445.4C497.33,450.56 497.47,458.04 497.6,464.0C498.77,516.19 499.93,566.50 501.1,566.5C502.10,566.50 503.10,500.96 504.1,464.0C504.50,449.21 504.90,429.09 505.3,418.3C505.73,406.61 506.17,398.90 506.6,398.9C507.50,398.90 508.40,400.58 509.3,402.0C510.20,403.42 511.10,405.84 512.0,407.4C513.37,409.76 514.73,409.22 516.1,412.8C516.83,414.72 517.57,417.00 518.3,420.1C519.20,423.90 520.10,431.24 521.0,434.5C521.50,436.31 522.00,438.50 522.5,438.5C523.20,438.50 523.90,435.35 524.6,432.7C525.80,428.16 527.00,419.33 528.2,412.8C529.43,406.09 530.67,396.03 531.9,393.0C532.37,391.85 532.83,391.10 533.3,391.1C533.90,391.10 534.50,395.63 535.1,398.4C535.83,401.79 536.57,407.77 537.3,410.1C537.70,411.37 538.10,412.50 538.5,412.5C539.00,412.50 539.50,410.78 540.0,408.3C540.77,404.50 541.53,393.13 542.3,389.3C542.73,387.13 543.17,385.20 543.6,385.2C543.90,385.20 544.20,387.17 544.5,391.1C544.87,395.91 545.23,413.65 545.6,427.3C545.90,438.47 546.20,450.13 546.5,464.0C546.93,484.03 547.37,517.46 547.8,534.3C548.20,549.85 548.60,563.97 549.0,564.1C550.83,564.70 552.67,565.00 554.5,565.0C554.90,565.00 555.30,545.34 555.7,534.3C556.20,520.50 556.70,503.47 557.2,489.1C557.50,480.48 557.80,475.80 558.1,464.0C558.40,452.20 558.70,428.37 559.0,418.3C559.47,402.63 559.93,394.80 560.4,394.8C561.13,394.80 561.87,399.14 562.6,402.0C563.50,405.51 564.40,410.68 565.3,414.6C566.20,418.52 567.10,421.03 568.0,425.5C568.73,429.14 569.47,432.15 570.2,438.1C570.80,442.96 571.40,444.13 572.0,456.2C572.60,468.27 573.20,508.81 573.8,525.3C574.57,546.37 575.33,556.90 576.1,556.9C576.70,556.90 577.30,547.63 577.9,534.3C578.60,518.75 579.30,486.14 580.0,464.0C580.40,451.35 580.80,436.62 581.2,427.3C581.80,413.32 582.40,410.71 583.0,405.0C583.47,400.56 583.93,396.75 584.4,394.8C585.13,391.73 585.87,390.20 586.6,390.2C587.33,390.20 588.07,393.26 588.8,396.6C589.57,400.09 590.33,407.17 591.1,411.0C592.30,417.00 593.50,417.97 594.7,421.9C595.73,425.28 596.77,426.74 597.8,432.7C598.60,437.32 599.40,446.14 600.2,450.8C600.97,455.26 601.73,460.40 602.5,460.4C603.10,460.40 603.70,453.93 604.3,445.4C604.90,436.87 605.50,417.88 606.1,409.2C606.53,402.93 606.97,397.43 607.4,395.7C607.70,394.50 608.00,393.90 608.3,393.9C609.03,393.90 609.77,397.61 610.5,400.2C611.57,403.97 612.63,408.53 613.7,414.6C614.60,419.73 615.50,424.50 616.4,432.7C617.00,438.17 617.60,441.94 618.2,452.0C619.13,467.65 620.07,505.24 621.0,525.3C621.77,541.78 622.53,565.90 623.3,565.9C624.03,565.90 624.77,540.23 625.5,525.3C626.40,506.97 627.30,488.53 628.2,464.0C628.50,455.82 628.80,443.32 629.1,438.1C630.00,422.43 630.90,420.81 631.8,414.6C633.00,406.32 634.20,403.03 635.4,398.4C636.30,394.93 637.20,391.18 638.1,389.3C638.83,387.77 639.57,387.00 640.3,387.0C640.77,387.00 641.23,389.01 641.7,393.0C642.30,398.14 642.90,409.07 643.5,418.3C644.17,428.55 644.83,438.47 645.5,452.0C646.47,471.61 647.43,506.17 648.4,525.3C649.20,541.13 650.00,561.90 650.8,561.9C651.57,561.90 652.33,532.94 653.1,516.2C653.83,500.18 654.57,482.51 655.3,464.0C655.77,452.22 656.23,437.46 656.7,427.3C657.43,411.34 658.17,402.36 658.9,394.8C659.40,389.65 659.90,386.04 660.4,383.9C660.73,382.47 661.07,381.60 661.4,381.6C661.90,381.60 662.40,385.26 662.9,391.1C663.50,398.11 664.10,415.04 664.7,423.7C665.17,430.44 665.63,436.05 666.1,439.9C666.40,442.37 666.70,445.40 667.0,445.4C667.80,445.40 668.60,441.08 669.4,439.0C670.23,436.84 671.07,432.70 671.9,432.7C672.27,432.70 672.63,435.10 673.0,439.9C673.33,444.26 673.67,454.54 674.0,464.0C674.50,478.19 675.00,500.66 675.5,516.2C676.10,534.85 676.70,564.10 677.3,564.1C677.93,564.10 678.57,534.00 679.2,516.2C679.77,500.27 680.33,494.16 680.9,464.0C681.10,453.36 681.30,437.37 681.5,427.3C681.80,412.20 682.10,399.00 682.4,396.6C682.70,394.20 683.00,393.00 683.3,393.0C683.90,393.00 684.50,397.08 685.1,399.3C686.00,402.63 686.90,410.10 687.8,410.1C688.70,410.10 689.60,408.84 690.5,408.3C691.23,407.86 691.97,407.10 692.7,407.1C693.00,407.10 693.30,409.00 693.6,412.8C694.10,419.13 694.60,433.73 695.1,450.0C695.70,469.53 696.30,505.62 696.9,525.3C697.37,540.61 697.83,561.40 698.3,561.4C698.90,561.40 699.50,532.43 700.1,516.2C700.70,499.97 701.30,491.52 701.9,464.0C702.13,453.30 702.37,433.49 702.6,427.3C703.10,414.03 703.60,412.59 704.1,407.4C704.83,399.79 705.57,397.11 706.3,393.9C707.20,389.96 708.10,387.90 709.0,387.9C709.67,387.90 710.33,391.11 711.0,394.8C711.70,398.67 712.40,405.09 713.1,411.0C714.00,418.59 714.90,428.02 715.8,436.3C716.60,443.66 717.40,452.02 718.2,458.0C718.73,461.99 719.27,468.30 719.8,468.3C720.17,468.30 720.53,465.28 720.9,462.0C721.33,458.12 721.77,451.17 722.2,445.4C722.80,437.41 723.40,423.77 724.0,420.1C724.60,416.43 725.20,415.21 725.8,414.6C727.30,413.07 728.80,412.30 730.3,412.3C731.20,412.30 732.10,413.59 733.0,414.6C733.93,415.64 734.87,418.50 735.8,418.5C736.73,418.50 737.67,412.20 738.6,410.0C739.43,408.03 740.27,406.75 741.1,405.6C742.03,404.31 742.97,403.60 743.9,402.9C744.67,402.33 745.43,401.60 746.2,401.6C746.53,401.60 746.87,402.70 747.2,404.9C747.50,406.88 747.80,426.77 748.1,439.2C748.33,448.87 748.57,459.91 748.8,470.0C749.17,485.85 749.53,503.43 749.9,516.2C750.60,540.57 751.30,560.50 752.0,560.5C752.63,560.50 753.27,551.77 753.9,534.3C754.43,519.59 754.97,483.87 755.5,470.0C756.03,456.13 756.57,449.20 757.1,449.2C757.70,449.20 758.30,455.95 758.9,461.0C759.50,466.05 760.10,473.96 760.7,479.5C761.27,484.73 761.83,491.84 762.4,493.5C763.33,496.23 764.27,496.54 765.2,497.6C766.23,498.77 767.27,498.40 768.3,500.0C768.80,500.77 769.30,509.83 769.8,516.2C770.40,523.84 771.00,536.50 771.6,543.3C772.07,548.59 772.53,553.75 773.0,555.1C774.03,558.10 775.07,558.91 776.1,559.6C777.00,560.20 777.90,560.50 778.8,560.5C779.27,560.50 779.73,550.23 780.2,543.3C780.93,532.41 781.67,508.55 782.4,501.8C782.90,497.20 783.40,494.90 783.9,494.9C784.90,494.90 785.90,495.37 786.9,496.3C787.93,497.26 788.97,498.13 790.0,501.8C790.80,504.64 791.60,509.65 792.4,514.4C793.30,519.74 794.20,525.57 795.1,532.5C796.00,539.43 796.90,550.18 797.8,556.0C798.57,560.96 799.33,566.50 800.1,566.5C800.53,566.50 800.97,561.51 801.4,556.0C802.00,548.38 802.60,531.47 803.2,521.6C803.63,514.47 804.07,505.91 804.5,502.7C804.83,500.23 805.17,499.00 805.5,499.0C806.37,499.00 807.23,501.30 808.1,502.7C809.17,504.42 810.23,507.30 811.3,508.6C813.00,510.67 814.70,509.63 816.4,511.7C816.83,512.23 817.27,518.66 817.7,523.5C818.30,530.20 818.90,541.52 819.5,548.8C820.10,556.08 820.70,567.18 821.3,567.2C825.20,567.33 829.10,567.40 833.0,567.4C834.70,567.40 836.40,566.30 838.1,566.3C839.73,566.30 841.37,567.23 843.0,567.7C844.50,568.13 846.00,568.57 847.5,569.0" fill="none" stroke="#ee8536" stroke-width="1.150" stroke-linejoin="round" stroke-linecap="butt"/>
<!-- brush handles -->
<rect x="86.9" y="337.7" width="5" height="13.500" rx="2.2" fill="none" stroke="#7d7d7d" stroke-width="1.100"/>
<rect x="87.600" y="338.400" width="3.600" height="5.400" rx="1.500" fill="#fff"/>
<rect x="852.300" y="338" width="8" height="13.800" rx="2" fill="none" stroke="#7d7d7d" stroke-width="1.100"/>
<line x1="854.200" x2="857" y1="344.800" y2="344.800" stroke="#8a8a8a" stroke-width="1"/>
</g>
</svg>
</div>
</body></html>
